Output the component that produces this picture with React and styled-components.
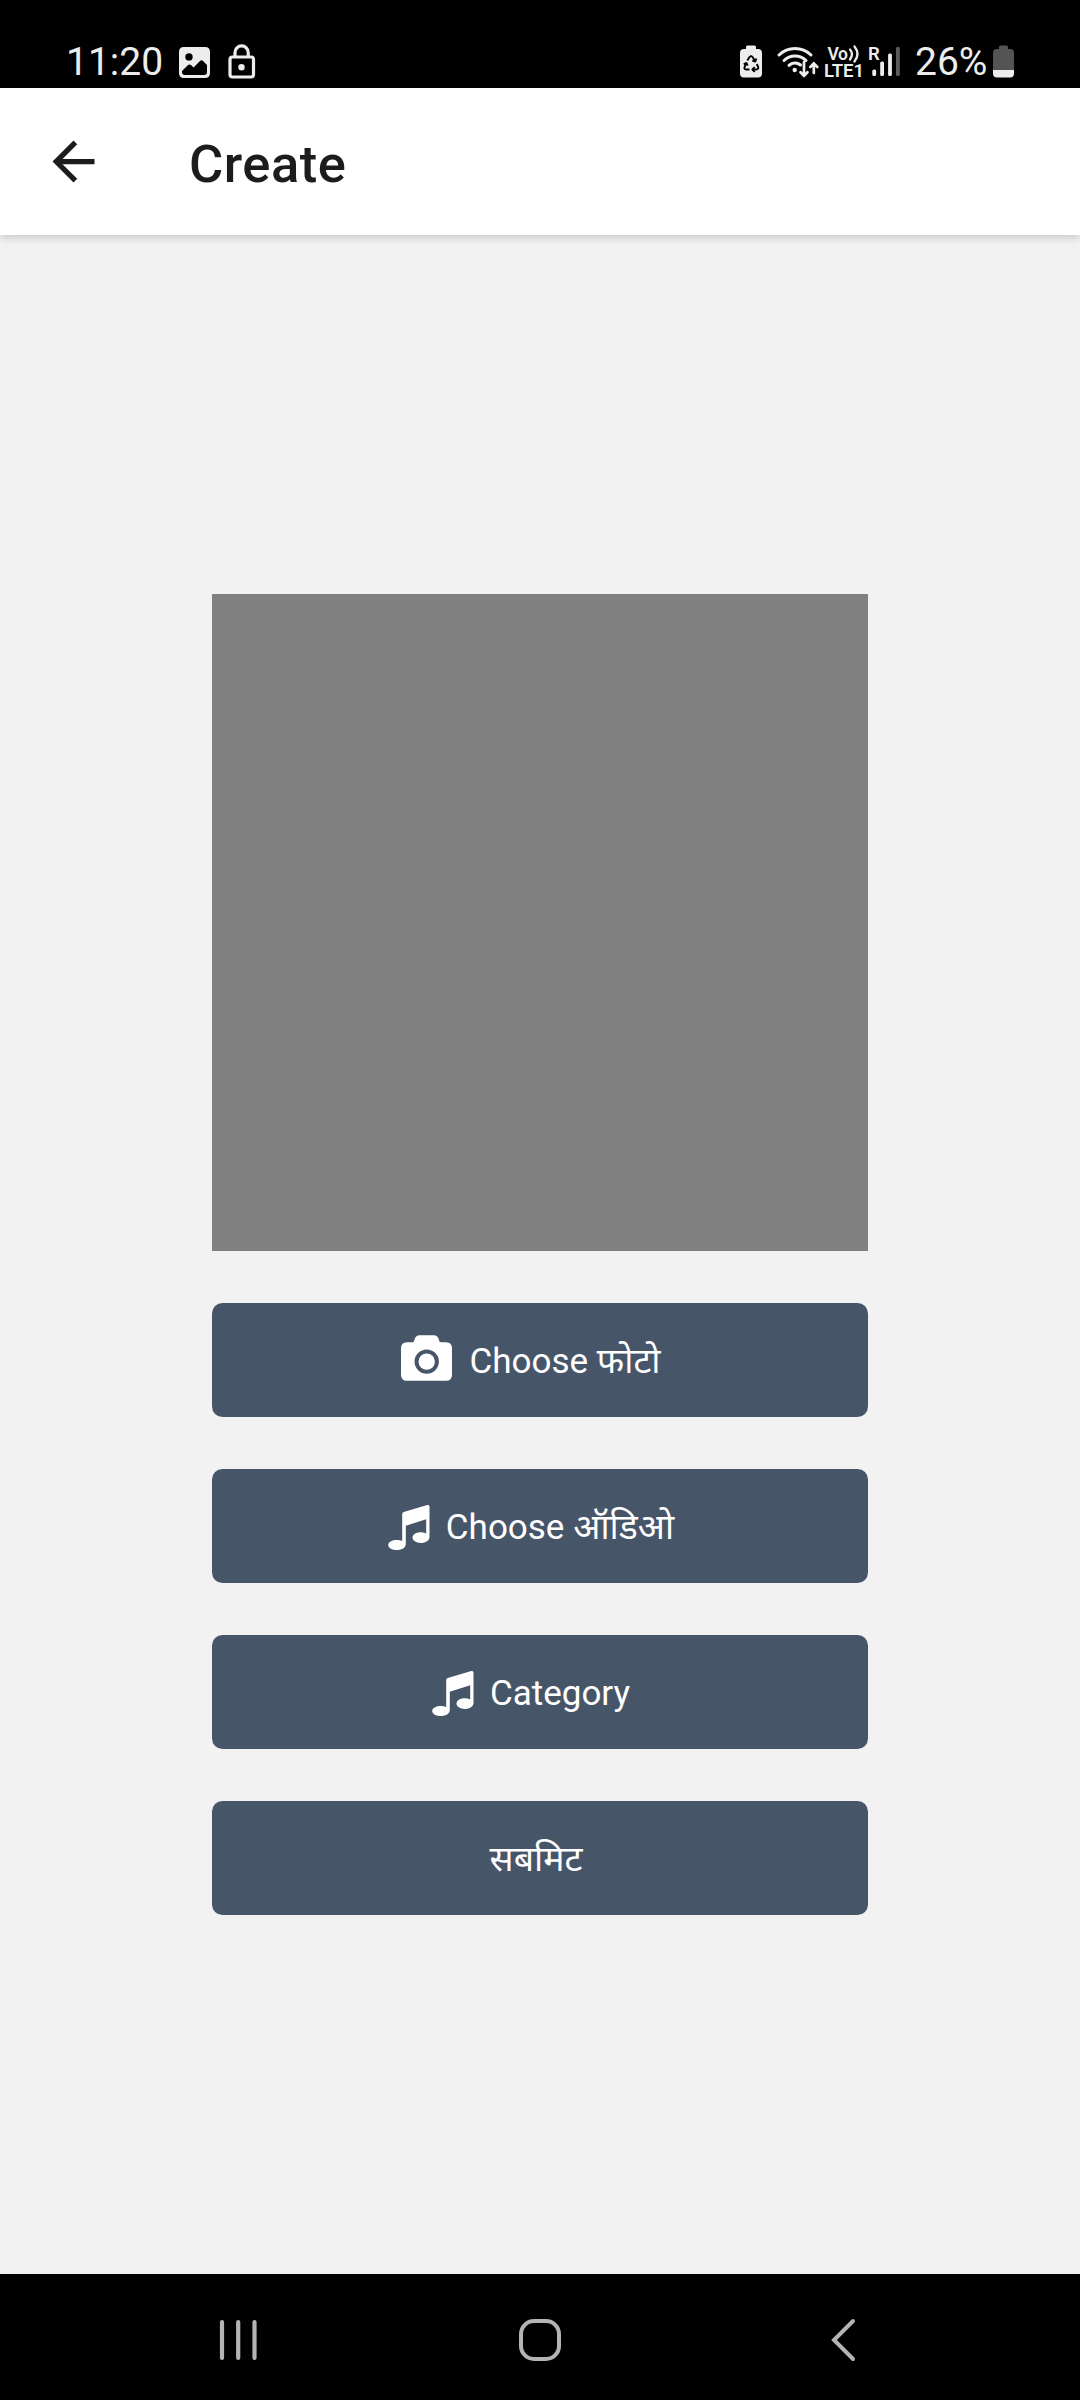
import React from "react";
import styled, { createGlobalStyle } from "styled-components";

const GlobalStyle = createGlobalStyle`
  * { box-sizing: border-box; }
  body { margin: 0; background: #f2f2f2; }
`;

const Screen = styled.div`
  display: flex;
  flex-direction: column;
  width: 1080px;
  height: 2400px;
  overflow: hidden;
  background: #f2f2f2;
  font-family: Roboto, "Noto Sans", "Noto Sans Devanagari", sans-serif;
`;

const StatusBar = styled.header`
  display: flex;
  align-items: center;
  justify-content: space-between;
  flex: none;
  height: 88px;
  padding: 0 66px 0 66px;
  background: #000;
  color: #ededed;
`;

const StatusGroup = styled.div`
  display: flex;
  align-items: center;
  height: 88px;
`;

const StatusText = styled.span`
  width: ${(p) => p.$width}px;
  padding-top: 35px;
  height: 88px;
  font-size: 39px;
  line-height: 54px;
  white-space: nowrap;
`;

const Glyph = styled.svg`
  display: block;
  flex: none;
`;

const TitleBar = styled.div`
  display: flex;
  align-items: center;
  flex: none;
  height: 147px;
  padding-left: 42px;
  background: #fff;
  box-shadow: 0 2px 9px rgba(0, 0, 0, 0.2);
  z-index: 1;
`;

const Title = styled.h1`
  margin: 4px 0 0 84px;
  color: #1c1c1e;
  font-size: 52.5px;
  font-weight: 500;
  letter-spacing: 0.5px;
  line-height: 62px;
`;

const Content = styled.main`
  display: flex;
  flex-direction: column;
  align-items: center;
  flex: 1;
  gap: 52px;
  padding-top: 359px;
`;

const Preview = styled.div`
  width: 656px;
  height: 657px;
  background: #808080;
`;

const ActionButton = styled.button`
  display: flex;
  align-items: center;
  justify-content: center;
  width: 656px;
  height: 114px;
  padding: 0 ${(p) => p.$trail}px 0 0;
  border: 0;
  border-radius: 10.5px;
  background: #475569;
  color: #fff;
  font-family: inherit;
  font-size: 35px;
  line-height: 44px;
`;

const Label = styled.span`
  margin-top: 3px;
  margin-left: ${(p) => (p.$icon ? 16 : 0)}px;
  white-space: nowrap;
`;

const Hindi = styled.span`
  font-size: 35.6px;
`;

const NavBar = styled.nav`
  display: flex;
  align-items: center;
  justify-content: space-between;
  flex: none;
  height: 126px;
  padding: 6px 224px 0 219px;
  background: #000;
`;

const StatusGlyph = ({ x, w, children }) => (
  <Glyph width={w} height="88" viewBox={`${x} 0 ${w} 88`}>
    {children}
  </Glyph>
);

const PictureIcon = () => (
  <StatusGlyph x={176} w={50}>
    <path
      fill="#ededed"
      fillRule="evenodd"
      d="M184 47h21q5 0 5 5v21q0 5-5 5h-21q-5 0-5-5V52q0-5 5-5Zm5 6.2a3.7 3.7 0 1 0 0 7.4 3.7 3.7 0 0 0 0-7.4ZM182 71l6-6q1.500-1 3 0l2.500 2.500L200 61q1.500-1.300 3 0l4 4v7q0 3-3 3h-19q-3 0-3-3Z"
    />
  </StatusGlyph>
);

const LockIcon = () => (
  <StatusGlyph x={226} w={32}>
    <g fill="none" stroke="#ededed" strokeWidth="3.2">
      <rect x="230" y="57" width="23.500" height="20" rx="2.500" />
      <path d="M235 57v-4.500a6.600 6.600 0 0 1 13.200 0V57" />
    </g>
    <circle cx="241.500" cy="67.300" r="3.200" fill="#ededed" />
  </StatusGlyph>
);

const BatterySaver = () => (
  <StatusGlyph x={736} w={38}>
    <path
      fill="#ededed"
      d="M746 49v-2q0-1.500 1.500-1.500h7q1.500 0 1.500 1.500v2h2q4 0 4 4v20.500q0 4-4 4h-14q-4 0-4-4V53q0-4 4-4Z"
    />
    <g fill="none" stroke="#000" strokeWidth="1.900" strokeLinejoin="round">
      <path d="M747.300 60.500 749.500 57q1.500-1.800 3 0l2.600 4M756.800 64l1.400 3q.6 2.300-2 2.500h-3.500M749.500 69.500h-3.300q-2.500-.3-1.600-2.700l1.800-3.600" />
      <path d="m756.300 58.500-1 3-3-.8M754.700 67.200l-2.300 2.300 2.300 2.300M743.700 64.300l2.700-1.400 1.300 2.800" />
    </g>
  </StatusGlyph>
);

const WifiIcon = () => (
  <StatusGlyph x={774} w={48}>
    <g fill="none" stroke="#ededed" strokeWidth="3" strokeLinecap="round">
      <path d="M779 55a23 23 0 0 1 32 0M784 60.500a15.700 15.700 0 0 1 22 0M789 65.300a8.600 8.600 0 0 1 11.500-.3" />
      <path strokeWidth="2.700" d="M804 62v13.500M800.500 72.200l3.500 3.600 3.500-3.600M813.800 73V64M810.300 67l3.500-3.600 3.500 3.600" />
    </g>
    <circle cx="794.700" cy="70" r="2.200" fill="#ededed" />
  </StatusGlyph>
);

const CarrierIcon = () => (
  <StatusGlyph x={822} w={44}>
    <g fill="#ededed" fontFamily="Roboto, sans-serif" fontWeight="600">
      <text x="827.500" y="59.500" fontSize="17.500" textLength="20.500">Vo</text>
      <text x="824" y="77" fontSize="18.500" textLength="40">LTE1</text>
    </g>
    <path
      d="M850 49.500q4 4.500 0 10M854.500 46.500q6 7.500 0 15"
      fill="none"
      stroke="#ededed"
      strokeWidth="2.300"
      strokeLinecap="round"
    />
  </StatusGlyph>
);

const SignalIcon = () => (
  <StatusGlyph x={866} w={49}>
    <text x="868" y="60" fontSize="18.500" fontFamily="Roboto, sans-serif" fontWeight="600" fill="#ededed">R</text>
    <g fill="#ededed">
      <rect x="872.300" y="69.500" width="3.800" height="6.500" rx="1.500" />
      <rect x="880.200" y="61.500" width="3.800" height="14.500" rx="1.500" />
      <rect x="888.100" y="53.500" width="3.800" height="22.500" rx="1.500" />
      <rect x="896" y="46.800" width="3.800" height="29.200" rx="1.500" fill="#5c5c5c" />
    </g>
  </StatusGlyph>
);

const BatteryIcon = () => (
  <StatusGlyph x={990} w={24}>
    <path fill="#545454" d="M999 49v-2q0-1.500 1.500-1.500h6q1.500 0 1.500 1.500v2h2q4 0 4 4v17h-21V53q0-4 4-4Z" />
    <path fill="#ededed" d="M993 70h21v3.500q0 4-4 4h-13q-4 0-4-4Z" />
  </StatusGlyph>
);

const BackArrow = () => (
  <Glyph width="63" height="63" viewBox="0 0 24 24">
    <path fill="#1c1c1e" d="M20 11H7.830l5.590-5.590L12 4l-8 8 8 8 1.410-1.410L7.830 13H20v-2z" />
  </Glyph>
);

const CameraIcon = () => (
  <Glyph width="52" height="50" viewBox="22 45 52 50">
    <path
      fill="#fff"
      fillRule="evenodd"
      d="M28 52.300h5.500q1.800 0 1.800-2.300 1-4.700 5.700-4.700h13.500q4.700 0 5.500 4.700 0 2.300 2 2.300h5q6 0 6 6v26.400q0 6-6 6H28q-6 0-6-6V58.300q0-6 6-6ZM47.700 59.400a12.200 12.200 0 1 0 0 24.400 12.200 12.200 0 0 0 0-24.400Z"
    />
    <circle cx="47.700" cy="71.600" r="8.200" fill="#fff" />
  </Glyph>
);

const MusicIcon = () => (
  <Glyph width="42" height="50" viewBox="17.500 41 42 50">
    <path
      fill="#fff"
      d="M31.700 81V54.200q0-1.600 1.500-2.100l23.600-7q2.200-.5 2.200 1.700V77c0 3.500-4 6-8.700 6S42 80.700 42 77.600s3.700-5.300 8.300-5.300q3.200 0 5.400 1.200V59.200L35.300 65.800V84c0 3.800-4 6-8.800 6s-8.800-2-8.800-5 4-5 8.800-5q3 0 5.200 1Z"
    />
  </Glyph>
);

const RecentsIcon = () => (
  <Glyph width="40" height="44" viewBox="0 0 40 44">
    <path d="M3 4v36M19.200 4v36M35.500 4v36" stroke="#b4b4b4" strokeWidth="4.200" strokeLinecap="round" />
  </Glyph>
);

const HomeIcon = () => (
  <Glyph width="44" height="44" viewBox="0 0 44 44">
    <rect x="3" y="3" width="38" height="38" rx="13" fill="none" stroke="#b4b4b4" strokeWidth="4" />
  </Glyph>
);

const BackIcon = () => (
  <Glyph width="35" height="44" viewBox="-9 0 35 44">
    <path d="M23 3 4 22l19 19" fill="none" stroke="#b4b4b4" strokeWidth="4" strokeLinecap="round" />
  </Glyph>
);

export default function App() {
  return (
    <Screen>
      <GlobalStyle />
      <StatusBar>
        <StatusGroup>
          <StatusText $width={110}>11:20</StatusText>
          <PictureIcon />
          <LockIcon />
        </StatusGroup>
        <StatusGroup>
          <BatterySaver />
          <WifiIcon />
          <CarrierIcon />
          <SignalIcon />
          <StatusText $width={75}>26%</StatusText>
          <BatteryIcon />
        </StatusGroup>
      </StatusBar>
      <TitleBar>
        <BackArrow />
        <Title>Create</Title>
      </TitleBar>
      <Content>
        <Preview />
        <ActionButton $trail={18}>
          <CameraIcon />
          <Label $icon>
            Choose <Hindi>फोटो</Hindi>
          </Label>
        </ActionButton>
        <ActionButton $trail={18}>
          <MusicIcon />
          <Label $icon>
            Choose <Hindi>ऑडिओ</Hindi>
          </Label>
        </ActionButton>
        <ActionButton $trail={18}>
          <MusicIcon />
          <Label $icon>Category</Label>
        </ActionButton>
        <ActionButton $trail={8}>
          <Label>
            <Hindi>सबमिट</Hindi>
          </Label>
        </ActionButton>
      </Content>
      <NavBar>
        <RecentsIcon />
        <HomeIcon />
        <BackIcon />
      </NavBar>
    </Screen>
  );
}
